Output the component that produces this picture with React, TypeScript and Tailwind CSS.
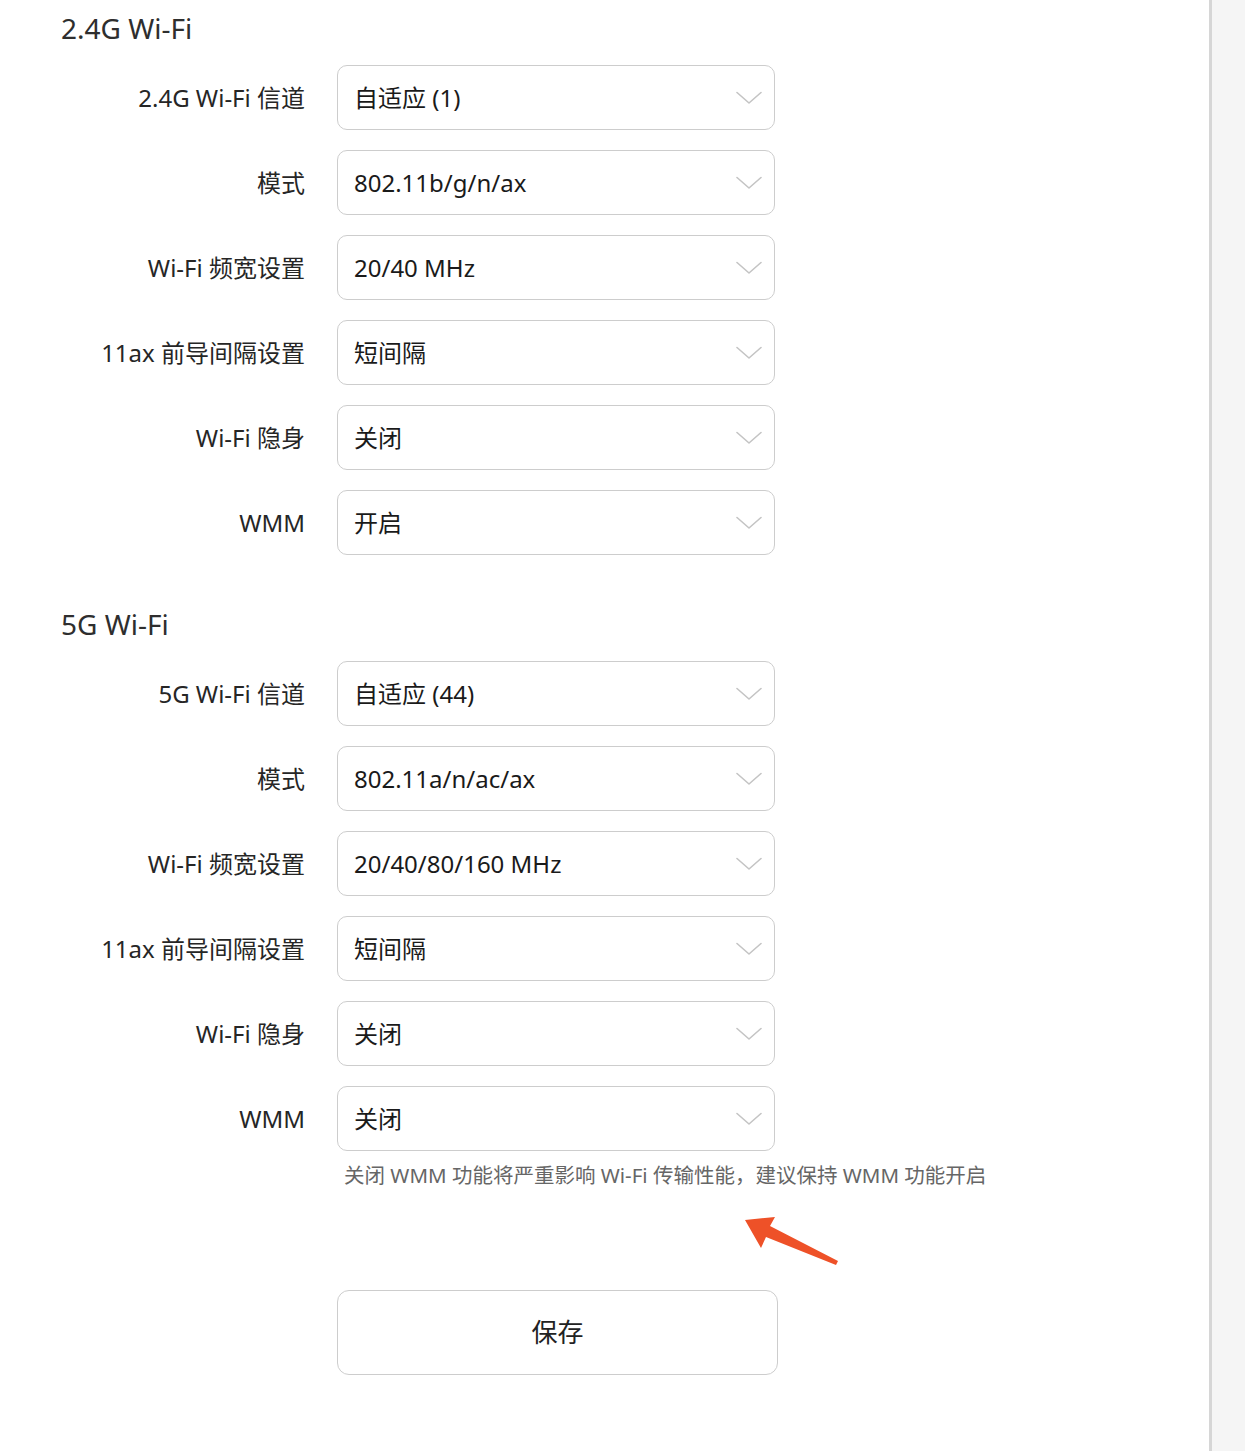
import React from 'react';

interface Field {
  label: string;
  value: string;
}

const band24: Field[] = [
  { label: '2.4G Wi-Fi 信道', value: '自适应 (1)' },
  { label: '模式', value: '802.11b/g/n/ax' },
  { label: 'Wi-Fi 频宽设置', value: '20/40 MHz' },
  { label: '11ax 前导间隔设置', value: '短间隔' },
  { label: 'Wi-Fi 隐身', value: '关闭' },
  { label: 'WMM', value: '开启' },
];

const band5: Field[] = [
  { label: '5G Wi-Fi 信道', value: '自适应 (44)' },
  { label: '模式', value: '802.11a/n/ac/ax' },
  { label: 'Wi-Fi 频宽设置', value: '20/40/80/160 MHz' },
  { label: '11ax 前导间隔设置', value: '短间隔' },
  { label: 'Wi-Fi 隐身', value: '关闭' },
  { label: 'WMM', value: '关闭' },
];

const Chevron = () => (
  <svg width="26" height="14" viewBox="0 0 26 14" fill="none" className="shrink-0">
    <path d="M1 1.5 L13 12 L25 1.5" stroke="#c4c4c4" strokeWidth="1.6" strokeLinejoin="round" strokeLinecap="round" />
  </svg>
);

const SelectRow: React.FC<Field> = ({ label, value }) => (
  <div className="flex items-center">
    <div className="w-[244px] text-right text-[24px] text-[#262626] whitespace-nowrap">{label}</div>
    <div className="ml-[32px] w-[438px] h-[65px] rounded-[10px] border-[1.5px] border-[#cdcdcd] bg-white flex items-center justify-between pl-[16px] pr-[12px]">
      <span className="text-[24px] text-[#1a1a1a]">{value}</span>
      <Chevron />
    </div>
  </div>
);

const Section: React.FC<{ title: string; fields: Field[] }> = ({ title, fields }) => (
  <div>
    <h2 className="h-[40px] leading-[40px] text-[28px] text-[#2e2e2e]">{title}</h2>
    <div className="mt-[17px] flex flex-col gap-[20px]">
      {fields.map((f, i) => (
        <SelectRow key={i} label={f.label} value={f.value} />
      ))}
    </div>
  </div>
);

export default function App() {
  return (
    <div
      className="flex w-full h-[1451px] bg-white overflow-hidden"
      style={{ fontFamily: '"Noto Sans", "Noto Sans CJK SC", sans-serif' }}
    >
      <div className="relative flex-1 pl-[61px] pt-[8px]">
        <Section title="2.4G Wi-Fi" fields={band24} />
        <div className="mt-[49px]">
          <Section title="5G Wi-Fi" fields={band5} />
        </div>
        <p className="ml-[283px] mt-[12px] h-[24px] leading-[24px] text-[20.5px] text-[#666] whitespace-nowrap">
          关闭 WMM 功能将严重影响 Wi-Fi 传输性能，建议保持 WMM 功能开启
        </p>
        <button className="ml-[276px] mt-[103px] w-[441px] h-[85px] rounded-[12px] border-[1.5px] border-[#cdcdcd] bg-white text-[26px] text-[#222]">
          保存
        </button>

        {/* annotation arrow */}
        <svg className="absolute left-[735px] top-[1205px]" width="110" height="70" viewBox="0 0 110 70">
          <polygon
            points="10,15 40,12 35,21 103,56 101,60 31,32 26,43"
            fill="#ee5128"
            strokeLinejoin="round"
          />
        </svg>
      </div>
      <div className="w-[3px] bg-[#d6d6d6]" />
      <div className="w-[33px] bg-[#f5f5f5]" />
    </div>
  );
}
